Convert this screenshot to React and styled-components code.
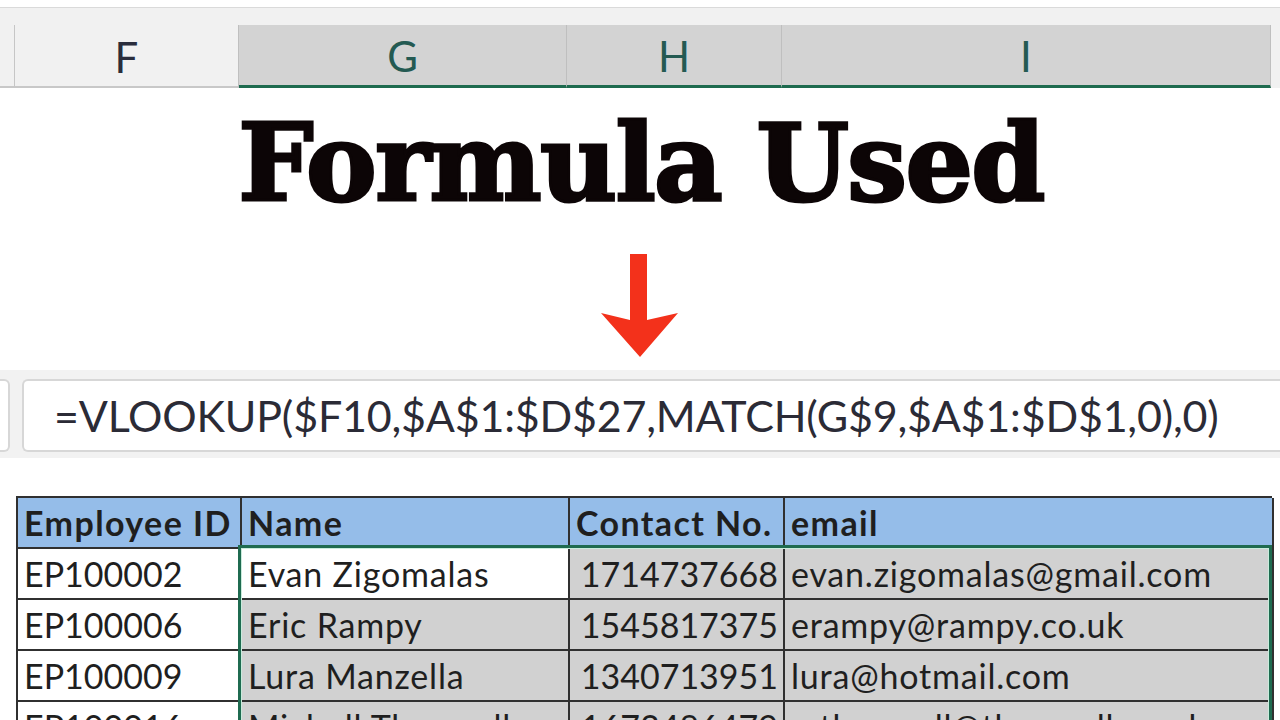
import styled, { createGlobalStyle } from "styled-components";

const GlobalStyle = createGlobalStyle`
  html, body {
    margin: 0;
    padding: 0;
    background: #ffffff;
    overflow: hidden;
  }
  * {
    box-sizing: border-box;
  }
`;

const COLS = "224px 328px 215px 489px";

const Page = styled.div`
  width: 1280px;
  height: 720px;
  overflow: hidden;
  font-family: Lato, "Liberation Sans", sans-serif;
`;

const TopEdge = styled.div`
  height: 8px;
  background: #ffffff;
  border-bottom: 1px solid #dadada;
`;

const HeaderArea = styled.div`
  height: 80px;
  background: #f1f1f1;
  padding-top: 17px;
`;

const ColumnHeaders = styled.div`
  display: grid;
  grid-template-columns: 15px ${COLS};
  height: 63px;
`;

const Corner = styled.div`
  border-right: 1px solid #c6c6c6;
  border-bottom: 2px solid #c8c8c8;
`;

const ColumnHeader = styled.div`
  display: flex;
  align-items: center;
  justify-content: center;
  padding-top: 2px;
  font-family: Lato, "Liberation Sans", sans-serif;
  font-size: 42px;
  color: ${(p) => (p.$selected ? "#245a52" : "#2a2d3c")};
  background: ${(p) => (p.$selected ? "#d3d3d3" : "#f1f1f1")};
  border-right: 1px solid #bfbfbf;
  border-bottom: ${(p) => (p.$selected ? "3px solid #1e6b4f" : "2px solid #c8c8c8")};
`;

const TitleArea = styled.div`
  height: 282px;
  background: #ffffff;
  padding-top: 22px;
  display: flex;
  flex-direction: column;
  align-items: center;
`;

const Title = styled.h1`
  margin: 0;
  font-family: "DejaVu Serif", "Liberation Serif", serif;
  font-weight: 900;
  font-size: 106px;
  line-height: 106px;
  color: #0c0506;
  letter-spacing: -1.6px;
  -webkit-text-stroke: 3px #0c0506;
  padding-left: 2px;
`;

const ArrowWrap = styled.div`
  margin-top: 38px;
  width: 80px;
  height: 104px;
`;

const FormulaStrip = styled.div`
  height: 88px;
  background: #f2f2f2;
  padding-top: 9px;
  display: flex;
  gap: 12px;
`;

const NameBoxEdge = styled.div`
  width: 10px;
  height: 73px;
  background: #ffffff;
  border: 2px solid #d7d7d7;
  border-left: none;
  border-radius: 0 6px 6px 0;
`;

const FormulaBox = styled.div`
  flex: 1;
  height: 73px;
  background: #ffffff;
  border: 2px solid #d7d7d7;
  border-right: none;
  border-radius: 6px 0 0 6px;
  display: flex;
  align-items: center;
  padding-left: 30px;
  font-family: Lato, "Liberation Sans", sans-serif;
  font-size: 43px;
  letter-spacing: -0.2px;
  color: #2b2b36;
  white-space: nowrap;
`;

const Gap = styled.div`
  height: 38px;
  background: #ffffff;
`;

const TableWrap = styled.div`
  position: relative;
  margin-left: 16px;
  width: 1256px;
`;

const Table = styled.div`
  display: grid;
  grid-template-columns: ${COLS};
  grid-auto-rows: 51px;
  border-top: 2px solid #303030;
  border-left: 2px solid #303030;
`;

const Cell = styled.div`
  display: flex;
  align-items: flex-end;
  justify-content: ${(p) => (p.$num ? "flex-end" : "flex-start")};
  padding: 0 5px 7px 6px;
  font-family: Lato, "Liberation Sans", sans-serif;
  font-size: 34px;
  line-height: 1;
  white-space: nowrap;
  overflow: hidden;
  color: #1f1f1f;
  font-weight: ${(p) => (p.$head ? 700 : 400)};
  letter-spacing: ${(p) => (p.$head ? "1.4px" : p.$text ? "0.8px" : "0")};
  background: ${(p) => (p.$head ? "#95bde9" : p.$shade ? "#d1d1d1" : "#ffffff")};
  border-right: 2px solid #303030;
  border-bottom: 2px solid #303030;
`;

const Selection = styled.div`
  position: absolute;
  left: 222px;
  top: 49px;
  width: 1034px;
  height: 300px;
  border: 3px solid #1f6b50;
  box-shadow: inset 0 0 0 1px #c9ecdc;
  pointer-events: none;
`;

const headers = ["Employee ID", "Name", "Contact No.", "email"];

const rows = [
  ["EP100002", "Evan Zigomalas", "1714737668", "evan.zigomalas@gmail.com"],
  ["EP100006", "Eric Rampy", "1545817375", "erampy@rampy.co.uk"],
  ["EP100009", "Lura Manzella", "1340713951", "lura@hotmail.com"],
  ["EP100016", "Michell Throssell", "1673486479", "mthrossell@throssell.co.uk"],
];

const DownArrow = () => (
  <svg width="80" height="104" viewBox="0 0 80 104">
    <path d="M30 0 H47 V66 L78 59 L40 103 L1 59 L30 66 Z" fill="#f3311b" />
  </svg>
);

const App = () => {
  return (
    <>
      <GlobalStyle />
      <Page>
        <TopEdge />
        <HeaderArea>
          <ColumnHeaders>
            <Corner />
            <ColumnHeader>F</ColumnHeader>
            <ColumnHeader $selected>G</ColumnHeader>
            <ColumnHeader $selected>H</ColumnHeader>
            <ColumnHeader $selected>I</ColumnHeader>
          </ColumnHeaders>
        </HeaderArea>
        <TitleArea>
          <Title>Formula Used</Title>
          <ArrowWrap>
            <DownArrow />
          </ArrowWrap>
        </TitleArea>
        <FormulaStrip>
          <NameBoxEdge />
          <FormulaBox>=VLOOKUP($F10,$A$1:$D$27,MATCH(G$9,$A$1:$D$1,0),0)</FormulaBox>
        </FormulaStrip>
        <Gap />
        <TableWrap>
          <Table>
            {headers.map((h) => (
              <Cell key={h} $head>
                {h}
              </Cell>
            ))}
            {rows.map((r, i) =>
              r.map((v, j) => (
                <Cell
                  key={`${i}-${j}`}
                  $num={j === 2}
                  $text={j === 1 || j === 3}
                  $shade={j > 0 && !(i === 0 && j === 1)}
                >
                  {v}
                </Cell>
              ))
            )}
          </Table>
          <Selection />
        </TableWrap>
      </Page>
    </>
  );
};

export default App;
